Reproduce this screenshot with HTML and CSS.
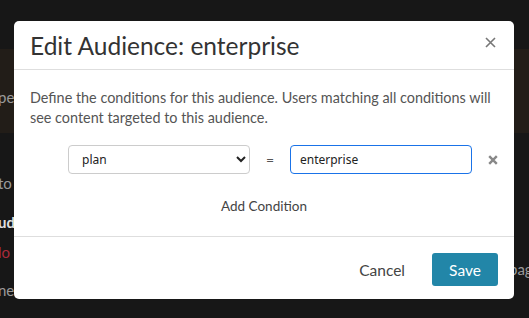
FILE: index.html
```html
<html>
  <head>
    <link rel="stylesheet" href="styles.css">
  </head>
  <body>
    <div class="page">
      <div class="banner">
        <div class="page-line">pe</div>
      </div>
      <div class="page-line line-to">to</div>
      <div class="page-line line-bold">ud</div>
      <div class="page-line line-red">lo</div>
      <div class="page-line line-ne">
        <span>ne</span>
        <span class="right-bit">pag</span>
      </div>
    </div>

    <div class="modal">
      <div class="modal-header">
        <h2>Edit Audience: enterprise</h2>
        <svg class="close" width="11" height="11" viewBox="0 0 11 11">
          <path d="M1 1 L10 10 M10 1 L1 10" stroke="#777" stroke-width="1.6" fill="none" />
        </svg>
      </div>
      <div class="modal-body">
        <p class="desc">
          Define the conditions for this audience. Users matching all conditions will
          see content targeted to this audience.
        </p>
        <div class="condition-row">
          <span></span>
          <select class="select-field">
            <option>plan</option>
          </select>
          <span class="equals">=</span>
          <input class="input-field" type="text" value="enterprise" />
          <span class="remove">
            <svg width="10" height="10" viewBox="0 0 10 10">
              <path d="M1.2 1.2 L8.8 8.8 M8.8 1.2 L1.2 8.8" stroke="#888" stroke-width="2.4" fill="none" />
            </svg>
          </span>
        </div>
        <div class="add-condition">Add Condition</div>
      </div>
      <div class="modal-footer">
        <button class="link">Cancel</button>
        <button class="primary">Save</button>
      </div>
    </div>
  </body>
</html>
```

FILE: styles.css
```css
body {
  margin: 0;
  background: #171717;
  font-family: Lato, "Noto Sans", sans-serif;
  overflow: hidden;
}
.page {
  padding-top: 49px;
  color: #9a9a9a;
  font-size: 15px;
  line-height: 18px;
}
.banner {
  background: #221d18;
  height: 84px;
  box-sizing: border-box;
  padding-top: 39px;
}
.page-line {
  margin-left: -2px;
}
.line-to {
  margin-top: 41px;
}
.line-bold {
  margin-top: 21px;
  color: #e0e0e0;
  font-weight: 700;
}
.line-red {
  margin-top: 12px;
  color: #a82a3b;
}
.line-ne {
  margin-top: 20px;
  position: relative;
}
.right-bit {
  position: absolute;
  left: 511px;
  top: -21px;
}
.modal {
  position: absolute;
  left: 14px;
  top: 21px;
  width: 500px;
  background: #fff;
  border-radius: 5px;
  color: #333;
}
.modal-header {
  display: flex;
  align-items: center;
  justify-content: space-between;
  padding: 0 18px 0 16px;
  height: 48px;
  border-bottom: 1px solid #dedede;
}
h2 {
  margin: 0;
  font-size: 24.5px;
  font-weight: 400;
  color: #333;
}
.close {
  margin-top: -6px;
}
.modal-body {
  padding: 18px 16px 20px 16px;
  border-bottom: 1px solid #dedede;
}
.desc {
  margin: 0;
  font-size: 14.4px;
  line-height: 20px;
  color: #555;
}
.condition-row {
  display: grid;
  grid-template-columns: 38px 182px 40px 182px 1fr;
  align-items: center;
  margin-top: 17px;
}
.select-field {
  height: 29px;
  border: 1px solid #ccc;
  border-radius: 4px;
  background: #fff;
  font-family: "Noto Sans", sans-serif;
  font-size: 12px;
  color: #222;
  padding: 0 9px;
}
.equals {
  text-align: center;
  color: #555;
  font-size: 14px;
}
.input-field {
  height: 29px;
  box-sizing: border-box;
  border: 1px solid #1a73e8;
  border-radius: 4px;
  font-family: "Noto Sans", sans-serif;
  font-size: 12px;
  color: #222;
  padding: 0 9px;
  outline: none;
}
.remove {
  display: flex;
  justify-content: flex-end;
}
.add-condition {
  text-align: center;
  margin-top: 22px;
  font-size: 13.5px;
  color: #444;
  line-height: 20px;
}
.modal-footer {
  display: flex;
  justify-content: flex-end;
  align-items: center;
  gap: 27px;
  padding: 16px 16px 13px 16px;
}
button {
  font-family: Lato, "Noto Sans", sans-serif;
  font-size: 15.5px;
  border: none;
  cursor: pointer;
}
.link {
  background: none;
  color: #444;
  padding: 0;
}
.primary {
  background: #2286a8;
  color: #fff;
  width: 66px;
  height: 33px;
  border-radius: 3px;
}
```
